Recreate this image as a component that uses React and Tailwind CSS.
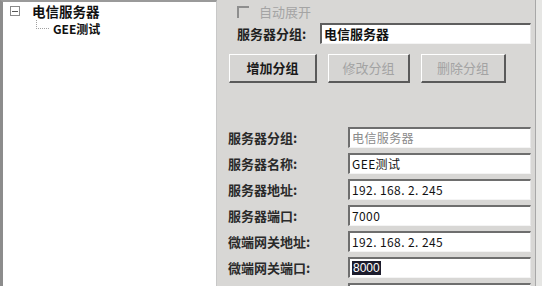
import React from 'react';

const cjk = { fontFamily: '"SimSun", "Noto Sans CJK SC", sans-serif' };
const latin = { fontFamily: '"Liberation Sans", "Noto Sans CJK SC", sans-serif' };

function Field({ value, muted, selected }) {
    return (
        <div className="w-[183px] h-[21px] bg-white border-t-2 border-l-2 border-t-[#6e6e6e] border-l-[#6e6e6e] border-b border-r border-b-[#f4f4f4] border-r-[#e8e8e8] flex items-center pl-[2px]">
            {selected ? (
                <span className="bg-[#1c1c2c] text-white text-[12px] leading-[14px] px-[1px]" style={latin}>8000</span>
            ) : (
                <span className={`text-[12px] tracking-[0.4px] ${muted ? 'text-[#8a8a8a]' : 'text-[#111]'}`} style={cjk}>{value}</span>
            )}
        </div>
    );
}

function Btn({ label, disabled, width }) {
    return (
        <button
            className={`h-[29px] ${width} bg-[#d6d5d3] border-t border-l border-t-white border-l-white border-b-2 border-r-2 border-b-[#5a5a5a] border-r-[#5a5a5a] text-[13px] font-bold ${disabled ? 'text-[#a3a3a3] font-normal' : 'text-[#1a1a1a]'}`}
            style={cjk}
        >
            {label}
        </button>
    );
}

const rows = [
    { label: '服务器分组:', value: '电信服务器', muted: true },
    { label: '服务器名称:', value: 'GEE测试' },
    { label: '服务器地址:', value: '192. 168. 2. 245' },
    { label: '服务器端口:', value: '7000' },
    { label: '微端网关地址:', value: '192. 168. 2. 245' },
    { label: '微端网关端口:', value: '8000', selected: true },
    { label: '', value: '' },
];

export default function App() {
    return (
        <div className="w-[542px] h-[286px] overflow-hidden flex bg-[#e6e6e4]" style={cjk}>
            {/* tree */}
            <div className="w-[217px] h-full bg-white border-l-[3px] border-l-[#8c8c8c] border-t-2 border-t-[#9a9a9a] border-r border-r-[#c8c8c8] pl-[7px]">
                <div className="flex items-center h-[18px]">
                    <span className="w-[10px] h-[10px] border border-[#8a8a8a] flex items-center justify-center">
                        <span className="w-[6px] h-px bg-[#555]"></span>
                    </span>
                    <span className="ml-[12px] text-[13.5px] font-bold text-[#111] leading-[18px]">电信服务器</span>
                </div>
                <div className="flex items-start h-[17px]">
                    <span className="ml-[26px] w-[13px] h-[9px] border-l border-b border-dotted border-[#a0a0a0]"></span>
                    <span className="ml-[4px] text-[12px] font-bold text-[#111] leading-[17px]">GEE测试</span>
                </div>
            </div>

            {/* right panel */}
            <div className="w-[319px] h-full bg-[#d8d7d5] border-r border-r-[#a8a8a8] flex flex-col">
                <div className="flex items-center h-[13px] mt-[5px] pl-[20px]">
                    <span className="w-[12px] h-[12px] border-t-2 border-l-2 border-[#8e8e8e]"></span>
                    <span className="ml-[10px] text-[13px] text-[#a4a4a4]">自动展开</span>
                </div>
                <div className="flex items-center mt-[5px] pl-[20px]">
                    <span className="w-[83px] text-[13px] font-bold text-[#222]">服务器分组:</span>
                    <div className="w-[211px] h-[21px] bg-white border-t-2 border-l-2 border-t-[#5e5e5e] border-l-[#5e5e5e] border-b border-r border-b-[#f4f4f4] border-r-[#e8e8e8] flex items-center pl-[2px]">
                        <span className="text-[13px] font-bold text-[#111]">电信服务器</span>
                    </div>
                </div>
                <div className="flex mt-[10px] pl-[12px] gap-[11px]">
                    <Btn label="增加分组" width="w-[88px]" />
                    <Btn label="修改分组" width="w-[82px]" disabled />
                    <Btn label="删除分组" width="w-[85px]" disabled />
                </div>
                <div className="flex flex-col gap-[5px] mt-[44px] pl-[11px]">
                    {rows.map((r, i) => (
                        <div key={i} className="flex items-center">
                            <span className="w-[120px] text-[13px] text-[#2a2a2a] font-semibold">{r.label}</span>
                            <Field value={r.value} muted={r.muted} selected={r.selected} />
                        </div>
                    ))}
                </div>
            </div>
        </div>
    );
}
